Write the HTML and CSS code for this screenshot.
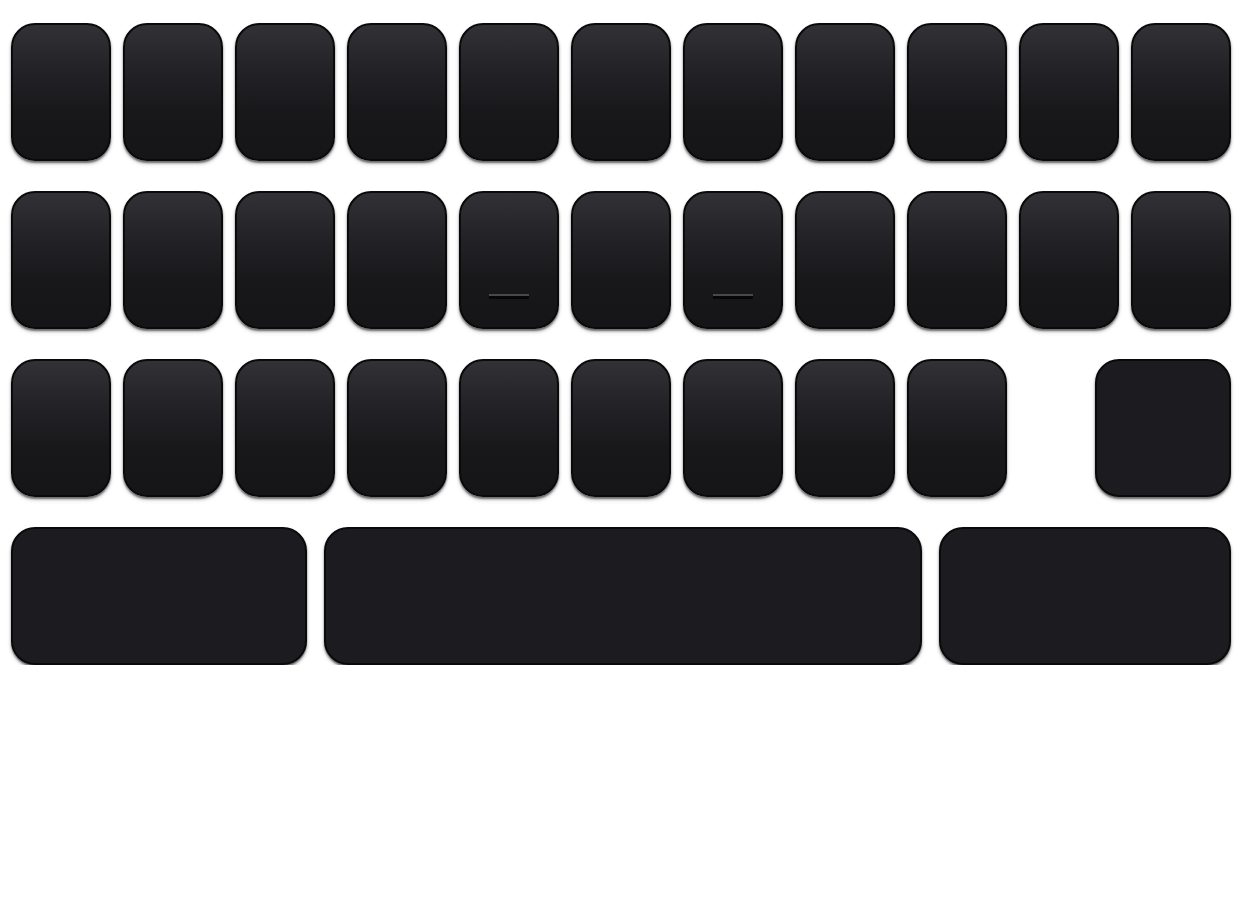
FILE: index.html
```html
<!DOCTYPE html>
<html>
<head>
<meta charset="utf-8">
<link rel="stylesheet" href="styles.css">
</head>
<body>
<div class="keyboard">
  <div class="row">
    <div class="key"></div><div class="key"></div><div class="key"></div><div class="key"></div><div class="key"></div><div class="key"></div><div class="key"></div><div class="key"></div><div class="key"></div><div class="key"></div><div class="key"></div>
  </div>
  <div class="row">
    <div class="key"></div><div class="key"></div><div class="key"></div><div class="key"></div><div class="key home"><span class="bump"></span></div><div class="key"></div><div class="key home"><span class="bump"></span></div><div class="key"></div><div class="key"></div><div class="key"></div><div class="key"></div>
  </div>
  <div class="row">
    <div class="key"></div><div class="key"></div><div class="key"></div><div class="key"></div><div class="key"></div><div class="key"></div><div class="key"></div><div class="key"></div><div class="key"></div>
    <div class="key flat enter"></div>
  </div>
  <div class="row bottom">
    <div class="key flat"></div><div class="key flat"></div><div class="key flat"></div>
  </div>
</div>
</body>
</html>
```
FILE: styles.css
```css
html, body {
  margin: 0;
  background: #ffffff;
}
.keyboard {
  width: 1220px;
  padding: 23px 11px 0 11px;
  display: flex;
  flex-direction: column;
  gap: 30px;
}
.row {
  display: flex;
  gap: 12px;
  height: 138px;
}
.key {
  box-sizing: border-box;
  width: 100px;
  height: 138px;
  border-radius: 24px;
  border: 2px solid #0a0a0b;
  background: linear-gradient(to bottom, #313136 0%, #242428 30%, #18181b 65%, #151517 100%);
  box-shadow: 0 2px 2px rgba(0, 0, 0, 0.5), 0 3px 4px rgba(0, 0, 0, 0.18);
  display: flex;
  align-items: flex-start;
  justify-content: center;
}
.key.flat {
  background: #1c1c20;
}
.enter {
  width: 136px;
  margin-left: auto;
}
.bottom {
  gap: 17px;
}
.bottom .key:nth-child(1) { width: 296px; }
.bottom .key:nth-child(2) { width: 598px; }
.bottom .key:nth-child(3) { flex: 1; width: auto; }
.bump {
  margin-top: 101px;
  width: 40px;
  height: 2px;
  background: #48484b;
  border-bottom: 3px solid #060606;
}
```
